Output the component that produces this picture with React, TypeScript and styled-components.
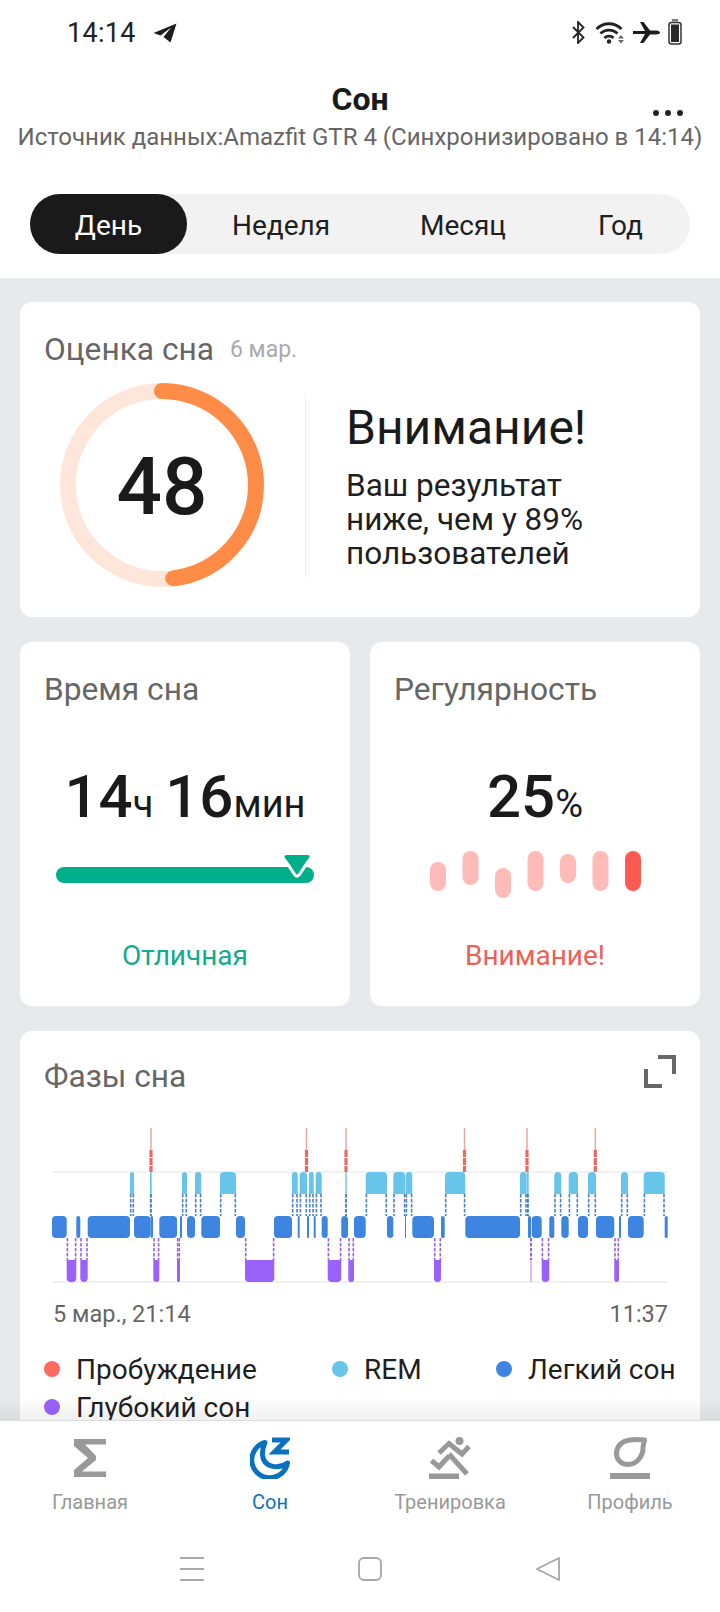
import React from "react";
import styled, { createGlobalStyle } from "styled-components";

const Global = createGlobalStyle`
  html, body { margin: 0; padding: 0; background: #fff; }
  body { font-family: Roboto, "Noto Sans", sans-serif; color: #1a1a1a; }
  * { box-sizing: border-box; }
`;

const Screen = styled.div`
  width: 720px; height: 1612px; display: flex; flex-direction: column; overflow: hidden; position: relative; background: #fff;
`;
const Top = styled.header`
  position: relative; flex: none; height: 278px; background: #fff;
`;
const StatusBar = styled.div`
  height: 64px; display: flex; align-items: center; padding: 0 38px 0 67px;
`;
const Clock = styled.span`
  font-size: 27px; line-height: 36px; letter-spacing: 0.3px; color: #222; margin: 2px 17px 0 0;
`;
const Telegram = styled.svg`
  margin-top: 1px; flex: none;
`;
const StatusIcons = styled.div`
  margin-left: auto; display: flex; align-items: center; gap: 8px;
`;
const Bluetooth = styled.svg`
  margin-right: 2px; flex: none;
`;
const Title = styled.h1`
  margin: 17px 0 0; font-size: 32px; line-height: 36px; font-weight: 700; text-align: center; color: #1a1a1a;
`;
const Subtitle = styled.div`
  margin-top: 4px; font-size: 24px; line-height: 32px; text-align: center; color: #666; white-space: nowrap;
`;
const MoreDots = styled.div`
  position: absolute; left: 653px; top: 110px; display: flex; gap: 6px;
`;
const MoreDot = styled.i`
  display: block; width: 6px; height: 6px; border-radius: 50%; background: #222;
`;
const Tabs = styled.div`
  margin: 41px 30px 0; height: 60px; display: grid; grid-template-columns: 157px 188px 176px 139px;
  background: #f2f2f2; border-radius: 30px;
`;
const Tab = styled.div<{ $active?: boolean }>`
  display: flex; align-items: center; justify-content: center; padding-top: 2px; font-size: 28px; border-radius: 30px;
  color: ${(p) => (p.$active ? "#fff" : "#1f1f1f")};
  background: ${(p) => (p.$active ? "#1a1a1a" : "transparent")};
`;
const Scroll = styled.main`
  flex: 1; min-height: 0; overflow: hidden; background: #e8e9ed; padding: 24px 20px; display: flex; flex-direction: column; gap: 25px;
`;
const Card = styled.section`
  flex: none; background: #fff; border-radius: 12px; padding: 28px 24px 0;
`;
const ScoreCard = styled(Card)`
  height: 315px;
`;
const CardTitle = styled.h2`
  margin: 0; font-size: 31.7px; line-height: 40px; font-weight: 400; color: #666; white-space: nowrap;
`;
const TitleDate = styled.span`
  margin-left: 16px; font-size: 23px; color: #aaa; vertical-align: 3px;
`;
const ScoreBody = styled.div`
  margin-top: 13px; display: flex; align-items: flex-start;
`;
const Ring = styled.div`
  position: relative; width: 204px; height: 204px; margin-left: 16px; flex: none;
`;
const RingValue = styled.div`
  position: absolute; inset: 3px 0 0; display: flex; align-items: center; justify-content: center;
  font-size: 80px; font-weight: 500; color: #1a1a1a; line-height: 1;
`;
const Divider = styled.div`
  width: 1px; height: 185px; background: #f0f0f0; margin: 10px 41px 0; flex: none;
`;
const Verdict = styled.div`
  padding-top: 17px; margin-left: -1px;
`;
const VerdictTitle = styled.div`
  font-size: 48px; line-height: 56px; color: #1a1a1a;
`;
const VerdictText = styled.div`
  margin-top: 13px; font-size: 31.5px; line-height: 34px; color: #1f1f1f;
`;
const Pair = styled.div`
  flex: none; display: grid; grid-template-columns: 330px 330px; gap: 20px;
`;
const MetricCard = styled(Card)`
  height: 364px; padding-left: 0; padding-right: 0;
`;
const MetricTitle = styled(CardTitle)`
  padding-left: 24px;
`;
const MetricValue = styled.div`
  margin-top: 52px; height: 70px; line-height: 70px; text-align: center; font-size: 60px; font-weight: 500; color: #1a1a1a; white-space: nowrap; word-spacing: -3px;
`;
const Unit = styled.span`
  font-size: 38px; font-weight: 400;
`;
const Graphic = styled.div`
  margin-top: 19px; height: 47px; display: flex; align-items: center; justify-content: center;
`;
const Track = styled.div`
  position: relative; width: 258px; height: 16px; border-radius: 8px; background: #00ae8a;
`;
const Marker = styled.svg`
  position: absolute; left: 226px; top: -13px; overflow: visible;
`;
const MetricLabel = styled.div<{ $color: string }>`
  margin-top: 40px; text-align: center; font-size: 28px; line-height: 36px; color: ${(p) => p.$color};
`;
const PhasesCard = styled(Card)`
  padding: 26px 0 40px;
`;
const PhasesHead = styled.div`
  display: flex; justify-content: space-between; align-items: flex-start; padding: 0 24px;
`;
const Expand = styled.svg`
  margin-top: -2px; flex: none;
`;
const Chart = styled.svg`
  display: block; margin: 31px 0 0 32px;
`;
const TimeRow = styled.div`
  margin-top: 16px; padding: 0 32px 0 33px; display: flex; justify-content: space-between; font-size: 23.5px; line-height: 30px; color: #666;
`;
const Legend = styled.div`
  margin: 21px 0 0 24px; display: grid; grid-template-columns: 288px 164px auto; grid-auto-rows: 38px;
`;
const LegendItem = styled.div`
  display: flex; align-items: center; gap: 16px; font-size: 28px; color: #1f1f1f; white-space: nowrap;
`;
const Dot = styled.i<{ $color: string }>`
  display: block; width: 16px; height: 16px; border-radius: 50%; background: ${(p) => p.$color}; flex: none;
`;
const Bottom = styled.footer`
  position: relative; flex: none; height: 192px; background: #fff; border-top: 1px solid #dcdcdc;
`;
const Fade = styled.div`
  position: absolute; left: 0; right: 0; top: -25px; height: 24px; pointer-events: none;
  background: linear-gradient(to bottom, rgba(0,0,0,0), rgba(0,0,0,0.06));
`;
const NavGrid = styled.nav`
  display: grid; grid-template-columns: repeat(4, 180px); padding-top: 16px;
`;
const NavItem = styled.div<{ $active?: boolean }>`
  display: flex; flex-direction: column; align-items: center;
  color: ${(p) => (p.$active ? "#0a72bd" : "#999")};
`;
const NavIconBox = styled.div`
  height: 42px; display: flex; align-items: center; justify-content: center;
`;
const NavLabel = styled.div`
  margin-top: 10px; font-size: 20px; line-height: 26px;
`;
const SysNav = styled.div`
  margin-top: 42px; display: flex; justify-content: center; gap: 154px; padding-left: 19px;
`;

/* chart data: page coordinates */
type Seg = [number, number];
const LIGHT: Seg[] = [[52,66.7],[76.3,80.3],[87.7,130],[134,150.7],[150.7,153],[159.3,177],[180,182],[187,195],[201.3,220],[236,245],[274,292],[297.7,299.7],[307,309],[313.7,315.7],[321.7,327.7],[341.3,348],[354,365.7],[387,393.3],[405,406],[412.3,434],[441,444.7],[465.3,520],[528,531],[531.7,541.7],[549.3,554.3],[561.3,568.7],[578,588],[596,614.3],[619,621],[628,643.7],[664.7,667.7]];
const REM: Seg[] = [[130,134],[150,151.7],[182,187],[195,201.3],[220,236],[292,297.7],[299.7,307],[309,313.7],[315.7,321.7],[345.3,346.7],[365.7,387],[393.3,405.3],[405.7,412.3],[445,465.3],[520,526.7],[527,528.7],[554.3,561.3],[568.7,578],[588,596],[621,628],[643.7,664.7]];
const DEEP: Seg[] = [[66.7,76.3],[80.3,87.7],[153.3,159.3],[177,180],[245,274.3],[327.7,341.3],[348.3,354],[434,441],[541.7,549.3],[614.3,619]];
const WAKE = [151, 306.5, 346, 464.5, 527, 595.3];

const round = (x0: number, x1: number, y0: number, y1: number, top: boolean, bottom: boolean) => {
  const r = Math.min(4, (x1 - x0) / 2);
  const tr = top ? r : 0;
  const br = bottom ? r : 0;
  return `M${x0} ${y0 + tr}Q${x0} ${y0} ${x0 + tr} ${y0}H${x1 - tr}Q${x1} ${y0} ${x1} ${y0 + tr}V${y1 - br}Q${x1} ${y1} ${x1 - br} ${y1}H${x0 + br}Q${x0} ${y1} ${x0} ${y1 - br}Z`;
};

const SleepChart = () => (
  <Chart width={616} height={155} viewBox="52 1128 616 155">
    <line x1={52} x2={668} y1={1172} y2={1172} stroke="#f1f1f3" strokeWidth={2} />
    <line x1={52} x2={668} y1={1282} y2={1282} stroke="#f1f1f3" strokeWidth={2} />
    {WAKE.map((x) => (
      <g key={x}>
        <line x1={x} x2={x} y1={1128} y2={1150} stroke="#f0a5a0" strokeWidth={1.5} />
        <line x1={x} x2={x} y1={1150} y2={1172} stroke="#e96a63" strokeWidth={3.2} strokeDasharray="7 1" />
      </g>
    ))}
    {REM.map(([a, b]) => (
      <g key={a}>
        <path d={round(a, b, 1172, 1194, true, false)} fill="#66c5e9" />
        <line x1={a + 0.7} x2={a + 0.7} y1={1194} y2={1216} stroke="#4a80c4" strokeWidth={1.6} strokeDasharray="3.5 1.5" />
        <line x1={b - 0.7} x2={b - 0.7} y1={1194} y2={1216} stroke="#4a80c4" strokeWidth={1.6} strokeDasharray="3.5 1.5" />
      </g>
    ))}
    {LIGHT.map(([a, b]) => (
      <path key={a} d={round(a, b, 1216, 1238, true, true)} fill="#3d85e0" />
    ))}
    {DEEP.map(([a, b]) => (
      <g key={a}>
        <line x1={a + 0.7} x2={a + 0.7} y1={1238} y2={1260} stroke="#9a62e4" strokeWidth={1.6} strokeDasharray="3.5 1.5" />
        <line x1={b - 0.7} x2={b - 0.7} y1={1238} y2={1260} stroke="#9a62e4" strokeWidth={1.6} strokeDasharray="3.5 1.5" />
        <path d={round(a, b, 1260, 1282, false, true)} fill="#9b62fb" />
      </g>
    ))}
    <line x1={531} x2={531} y1={1238} y2={1260} stroke="#9a62e4" strokeWidth={2} strokeDasharray="3.5 1.5" />
    <line x1={531} x2={531} y1={1260} y2={1282} stroke="#d6bdfb" strokeWidth={2} />
  </Chart>
);

const REG: [number, number, boolean?][] = [[11, 29],[0, 34],[17, 30],[0, 40],[3, 29],[0, 40],[0, 40, true]];

export default function App() {
  return (
    <Screen>
      <Global />
      <Top>
        <StatusBar>
          <Clock>14:14</Clock>
          <Telegram width="24" height="20" viewBox="0 0 24 20">
            <path d="M23.5 0.5 L0.5 10 L7.5 12.5 L18 4.5 L10.5 14 L17.5 19.5Z" fill="#1c1c1c" />
          </Telegram>
          <StatusIcons>
            <Bluetooth width="13" height="23" viewBox="0 0 13 23" fill="none" stroke="#222" strokeWidth="1.8">
              <path d="M1 6 L11.5 16.5 L6 22 V1 L11.5 6.5 L1 17" />
            </Bluetooth>
            <svg width="30" height="23" viewBox="0 0 30 23">
              <g fill="none" stroke="#222" strokeWidth="2.8">
                <path d="M1.5 8 C8.5 1 19.5 1 26.5 8" />
                <path d="M5.5 12.5 C10 8 18 8 22.5 12.5" />
                <path d="M9.5 17 C12 14.5 16 14.5 18.5 17" />
              </g>
              <circle cx="14" cy="20.5" r="2.2" fill="#222" />
              <path d="M23 17.5 L26 14 L29 17.5Z M23 19 H29 L26 22.5Z" fill="#666" />
            </svg>
            <svg width="27" height="21" viewBox="0 0 27 21">
              <path d="M0 9 H8 L12 9 L7 0 H10.5 L17 8.5 H23 C25.5 8.5 27 9.5 27 10.5 C27 11.5 25.5 12.5 23 12.5 H17 L10.5 21 H7 L12 12 H3 L0 12Z" fill="#1c1c1c" />
            </svg>
            <svg width="14" height="26" viewBox="0 0 14 26">
              <rect x="4" y="0" width="6" height="2.4" fill="#777" />
              <rect x="1" y="3.5" width="12" height="21.5" rx="2.5" fill="none" stroke="#333" strokeWidth="1.5" />
              <rect x="3" y="5.5" width="8" height="17.5" fill="#2a2a2a" />
            </svg>
          </StatusIcons>
        </StatusBar>
        <Title>Сон</Title>
        <MoreDots><MoreDot /><MoreDot /><MoreDot /></MoreDots>
        <Subtitle>Источник данных:Amazfit GTR 4 (Синхронизировано в 14:14)</Subtitle>
        <Tabs>
          <Tab $active>День</Tab>
          <Tab>Неделя</Tab>
          <Tab>Месяц</Tab>
          <Tab>Год</Tab>
        </Tabs>
      </Top>

      <Scroll>
        <ScoreCard>
          <CardTitle>Оценка сна<TitleDate>6 мар.</TitleDate></CardTitle>
          <ScoreBody>
            <Ring>
              <svg width="204" height="204" viewBox="0 0 204 204">
                <circle cx="102" cy="102" r="94" fill="none" stroke="#fee6da" strokeWidth="16" />
                <circle cx="102" cy="102" r="94" fill="none" stroke="#ff8c46" strokeWidth="16" strokeLinecap="round"
                  strokeDasharray={`${2 * Math.PI * 94 * 0.48} 1000`} transform="rotate(-90 102 102)" />
              </svg>
              <RingValue>48</RingValue>
            </Ring>
            <Divider />
            <Verdict>
              <VerdictTitle>Внимание!</VerdictTitle>
              <VerdictText>Ваш результат<br />ниже, чем у 89%<br />пользователей</VerdictText>
            </Verdict>
          </ScoreBody>
        </ScoreCard>

        <Pair>
          <MetricCard>
            <MetricTitle>Время сна</MetricTitle>
            <MetricValue>14<Unit>ч</Unit> 16<Unit>мин</Unit></MetricValue>
            <Graphic>
              <Track>
                <Marker width="30" height="26" viewBox="0 0 30 26">
                  <path d="M5 1 H25 Q29 1 27 4 L17 18 Q15 20 13 18 L3 4 Q1 1 5 1Z" fill="#00ae8a" />
                  <path d="M3.5 7 L13 21 Q15 23.5 17 21 L26.5 7" fill="none" stroke="#fff" strokeWidth="3" />
                </Marker>
              </Track>
            </Graphic>
            <MetricLabel $color="#12ab8c">Отличная</MetricLabel>
          </MetricCard>
          <MetricCard>
            <MetricTitle>Регулярность</MetricTitle>
            <MetricValue>25<Unit>%</Unit></MetricValue>
            <Graphic>
              <svg width="211" height="47" viewBox="0 0 211 47">
                {REG.map(([top, h, hot], i) => (
                  <rect key={i} x={i * 32.5} y={top} width="16" height={h} rx="8" fill={hot ? "#ff5a52" : "#ffbbb8"} />
                ))}
              </svg>
            </Graphic>
            <MetricLabel $color="#ee5f58">Внимание!</MetricLabel>
          </MetricCard>
        </Pair>

        <PhasesCard>
          <PhasesHead>
            <CardTitle>Фазы сна</CardTitle>
            <Expand width="32" height="33" viewBox="0 0 32 33" fill="none" stroke="#666" strokeWidth="4">
              <path d="M14 2 H30 V19" />
              <path d="M2 14 V31 H18" />
            </Expand>
          </PhasesHead>
          <SleepChart />
          <TimeRow><span>5 мар., 21:14</span><span>11:37</span></TimeRow>
          <Legend>
            <LegendItem><Dot $color="#ff6b63" />Пробуждение</LegendItem>
            <LegendItem><Dot $color="#66c5e9" />REM</LegendItem>
            <LegendItem><Dot $color="#3d85e0" />Легкий сон</LegendItem>
            <LegendItem><Dot $color="#9b62fb" />Глубокий сон</LegendItem>
          </Legend>
        </PhasesCard>
      </Scroll>

      <Bottom>
        <Fade />
        <NavGrid>
          <NavItem>
            <NavIconBox>
              <svg width="32" height="38" viewBox="0 0 32 38">
                <path d="M0 0 H32 V5.5 H11 L22 17 V21 L8 32.5 H32 V38 H0 V31 L14 19 L0 7Z" fill="currentColor" />
              </svg>
            </NavIconBox>
            <NavLabel>Главная</NavLabel>
          </NavItem>
          <NavItem $active>
            <NavIconBox>
              <svg width="40" height="42" viewBox="0 0 40 42" fill="none" stroke="currentColor">
                <path d="M15 5.5 A18 18 0 1 0 37.5 26 C 28 33 13.5 30 12.5 18 C 12.2 13 13.5 9 15 5.5Z" strokeWidth="5" strokeLinejoin="round" />
                <path d="M22 3 H36.5 L24.5 15 H39" strokeWidth="5" />
              </svg>
            </NavIconBox>
            <NavLabel>Сон</NavLabel>
          </NavItem>
          <NavItem>
            <NavIconBox>
              <svg width="42" height="42" viewBox="0 0 42 42" fill="none" stroke="currentColor" strokeWidth="5">
                <path d="M10 16 L20 6.5 L33 17 L40 9.5" />
                <path d="M20 17 L38 37" />
                <path d="M2.5 23.5 L10 30 L20 19" />
                <circle cx="30.5" cy="4" r="4" fill="currentColor" stroke="none" />
                <rect x="0" y="36.5" width="30" height="5.5" fill="currentColor" stroke="none" />
              </svg>
            </NavIconBox>
            <NavLabel>Тренировка</NavLabel>
          </NavItem>
          <NavItem>
            <NavIconBox>
              <svg width="40" height="42" viewBox="0 0 40 42">
                <path d="M34.5 3 C29 2.5 24 2.5 20 3 C11 4 6.5 10 6.5 16.5 C6.5 23.5 12 27.5 18 27.5 C26 27.5 33 20 33 11 C33 8 34 5.5 34.5 3Z" fill="none" stroke="currentColor" strokeWidth="5" strokeLinejoin="round" />
                <rect x="0" y="36" width="40" height="6" fill="currentColor" />
              </svg>
            </NavIconBox>
            <NavLabel>Профиль</NavLabel>
          </NavItem>
        </NavGrid>
        <SysNav>
          <svg width="24" height="24" viewBox="0 0 24 24" fill="none" stroke="#aaa" strokeWidth="2">
            <path d="M0 1 H24 M0 12 H24 M0 23 H24" />
          </svg>
          <svg width="24" height="24" viewBox="0 0 24 24" fill="none" stroke="#a6a6a6" strokeWidth="1.8">
            <rect x="1" y="1" width="22" height="22" rx="5" />
          </svg>
          <svg width="24" height="24" viewBox="0 0 24 24" fill="none" stroke="#a6a6a6" strokeWidth="1.8" strokeLinejoin="round">
            <path d="M23 1 V23 L1 12Z" />
          </svg>
        </SysNav>
      </Bottom>
    </Screen>
  );
}
